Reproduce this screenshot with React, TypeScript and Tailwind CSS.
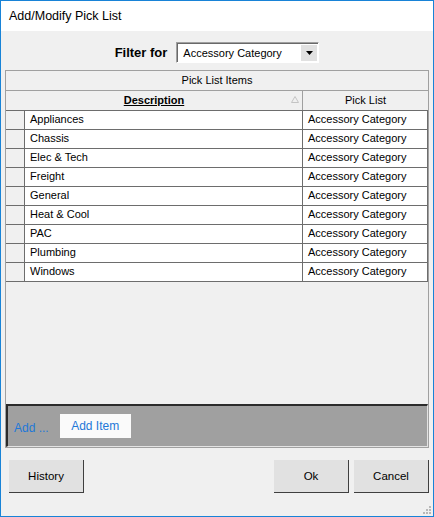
const items = [
  'Appliances',
  'Chassis',
  'Elec & Tech',
  'Freight',
  'General',
  'Heat & Cool',
  'PAC',
  'Plumbing',
  'Windows',
];

const SortGlyph = () => (
  <svg width="8" height="7" viewBox="0 0 8 7" className="absolute right-[3px] top-[5px]">
    <polygon points="4,0.5 7.5,6.5 0.5,6.5" fill="none" stroke="#c4c4c4" strokeWidth="1" />
  </svg>
);

const Grip = () => (
  <svg width="9" height="9" viewBox="0 0 9 9" className="absolute right-[2px] bottom-[2px]">
    <rect x="7" y="1" width="2" height="2" fill="#b8b8b8" />
    <rect x="4" y="4" width="2" height="2" fill="#b8b8b8" />
    <rect x="7" y="4" width="2" height="2" fill="#b8b8b8" />
    <rect x="1" y="7" width="2" height="2" fill="#b8b8b8" />
    <rect x="4" y="7" width="2" height="2" fill="#b8b8b8" />
    <rect x="7" y="7" width="2" height="2" fill="#b8b8b8" />
  </svg>
);

const DialogButton = ({ label, className = '' }: { label: string; className?: string }) => (
  <button
    className={`h-[33px] w-[75px] pt-[2px] bg-[#e1e1e1] border-b border-r border-[#3f3f3f] text-[11.5px] text-black ${className}`}
  >
    {label}
  </button>
);

const App = () => {
  return (
    <div className="relative w-[434px] h-[517px] border border-[#1883d7] bg-[#f0f0f0] flex flex-col font-['Liberation_Sans',Arial,sans-serif] text-black">
      {/* Title bar */}
      <div className="h-[30px] bg-white flex items-center pl-[8px] text-[12.5px]">Add/Modify Pick List</div>

      {/* Filter */}
      <div className="mt-[11px] mb-[7px] h-[21px] flex items-center justify-center gap-[9px]">
        <span className="text-[13px] font-bold">Filter for</span>
        <div className="w-[143px] h-[21px] border-t border-l border-[#a0a0a0] border-b border-r border-b-white border-r-white flex">
          <div className="flex-1 flex items-center bg-white border-t border-l border-[#696969] pl-[5px] pr-[1px]">
            <span className="flex-1 text-[11px]">Accessory Category</span>
            <div className="w-[16px] h-[16px] bg-[#e1e1e1] flex items-center justify-center">
              <svg width="7" height="4" viewBox="0 0 7 4">
                <polygon points="0,0 7,0 3.5,4" fill="#000" />
              </svg>
            </div>
          </div>
        </div>
      </div>

      {/* Grid */}
      <div className="mx-[4px] h-[378px] border border-[#a0a0a0] flex flex-col text-[11px]">
        <div className="h-[20px] shrink-0 border-b border-[#a0a0a0] flex items-center justify-center">Pick List Items</div>
        <div className="h-[20px] shrink-0 border-b border-[#6d6d6d] flex">
          <div className="relative w-[297px] border-r border-[#a0a0a0] flex items-center justify-center">
            <span className="font-bold underline">Description</span>
            <SortGlyph />
          </div>
          <div className="flex-1 flex items-center justify-center">Pick List</div>
        </div>
        {items.map((item) => (
          <div key={item} className="h-[19px] shrink-0 border-b border-[#6d6d6d] flex leading-[17px]">
            <div className="w-[19px] border-r border-[#6d6d6d] bg-[#f0f0f0]" />
            <div className="w-[278px] border-r border-[#6d6d6d] bg-white flex items-center pl-[5px] pb-[1px]">{item}</div>
            <div className="flex-1 bg-white flex items-center pl-[5px] pb-[1px] border-r border-[#6d6d6d]">Accessory Category</div>
          </div>
        ))}
        <div className="flex-1" />

        {/* Add panel */}
        <div className="h-[43px] shrink-0 bg-[#a0a0a0] border-t-2 border-l-2 border-[#2b2b2b] border-b border-r border-b-[#e3e3e3] border-r-[#e3e3e3] flex items-center pl-[6px] text-[12px] text-[#1f78d8]">
          <span className="mt-[3px]">Add ...</span>
          <button className="ml-[11px] w-[71px] h-[24px] bg-[#fafafa] text-[#1f78d8] text-[12px]">Add Item</button>
        </div>
      </div>

      {/* Buttons */}
      <div className="mt-[12px] pl-[8px] pr-[4px] flex items-start">
        <DialogButton label="History" />
        <div className="flex-1" />
        <DialogButton label="Ok" />
        <DialogButton label="Cancel" className="ml-[5px]" />
      </div>

      <Grip />
    </div>
  );
};

export default App;
